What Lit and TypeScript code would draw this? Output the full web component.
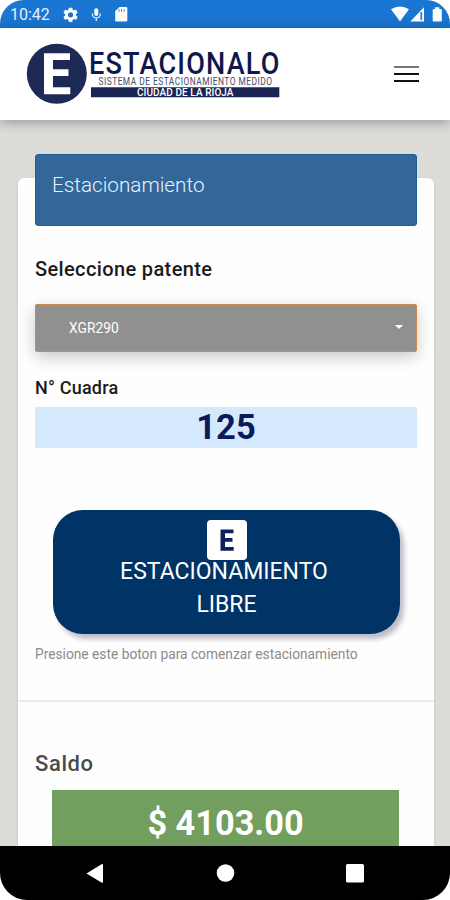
import { LitElement, html, css } from "lit";
import { customElement, property } from "lit/decorators.js";

@customElement("status-bar")
class StatusBar extends LitElement {
  static styles = css`
    :host { display: block; height: 28px; background: #1976d2; color: #fff; }
    .row { display: flex; align-items: center; height: 28px; }
    .time { width: 41px; margin-left: 10px; font-size: 16px; line-height: 28px; padding-top: 2px; box-sizing: border-box; white-space: nowrap; color: #e4effb; }
    .icons { display: block; width: 399px; height: 28px; }
  `;
  render() {
    return html`<div class="row">
      <div class="time">10:42</div>
      <svg class="icons" viewBox="51 0 399 28" fill="#fff">
        <g transform="translate(62 6.200) scale(.72)">
          <path d="M19.4 13a7.500 7.500 0 0 0 0-2l2.100-1.600c.2-.2.200-.4.100-.6l-2-3.500a.5.500 0 0 0-.6-.2l-2.500 1a7 7 0 0 0-1.700-1l-.4-2.600a.5.500 0 0 0-.5-.5h-4a.5.500 0 0 0-.5.500L9 5.100a7 7 0 0 0-1.700 1l-2.500-1a.5.500 0 0 0-.6.200l-2 3.500c-.1.200-.1.400.1.600L4.400 11a7.500 7.500 0 0 0 0 2l-2.100 1.600c-.2.200-.2.400-.1.600l2 3.500c.1.200.4.300.6.200l2.500-1a7 7 0 0 0 1.700 1l.4 2.600c0 .3.200.5.500.5h4c.3 0 .5-.2.500-.5l.4-2.600a7 7 0 0 0 1.700-1l2.500 1c.2.100.5 0 .6-.2l2-3.500c.1-.2.100-.4-.1-.6zM11.900 15.600a3.600 3.600 0 1 1 0-7.200 3.600 3.600 0 0 1 0 7.200z"/>
        </g>
        <rect x="94.300" y="8.300" width="4" height="7.800" rx="2"/>
        <path d="M92.300 13.500v.4a4 4 0 0 0 8 0v-.4M96.300 18v3" fill="none" stroke="#e4effb" stroke-width="1.300"/>
        <path d="M119.500 7h6.500q1.300 0 1.300 1.300v12q0 1.300-1.300 1.300h-9.500q-1.300 0-1.300-1.300v-9z"/>
        <path d="M119 9v3M121.500 9v3M124 9v3" stroke="#1976d2" stroke-width=".8"/>
        <path d="M391 9.300Q400 3.500 409 9.300L400 21.500z"/>
        <path d="M424 7.300V21.500H410.300z"/>
        <path d="M421.300 12v8" stroke="#1976d2" stroke-width="1.600"/>
        <path d="M435 7.300h4.300v1.700h1.200q1.300 0 1.300 1.200v10.200q0 1.200-1.300 1.200h-6.600q-1.200 0-1.200-1.200V10.200q0-1.200 1.200-1.200h1.100z"/>
      </svg>
    </div>`;
  }
}

@customElement("app-header")
class AppHeader extends LitElement {
  static styles = css`
    :host { display: block; position: relative; z-index: 1; height: 92px; background: #fff; box-shadow: 0 2px 12px rgba(0, 0, 0, .34); }
    .bar { display: flex; align-items: center; justify-content: space-between; height: 92px; padding: 0 31px 0 26px; }
    .logo { overflow: visible; }
    .menu { width: 25px; height: 18px; }
    text { font-family: Roboto, sans-serif; }
  `;
  render() {
    return html`<div class="bar">
      <svg class="logo" width="256" height="64" viewBox="26 42 256 64">
        <circle cx="56.800" cy="73.700" r="30" fill="#1d2a55"/>
        <path d="M44 53.300H70V60H53V69.300H68.500V76H53V87.200H70.300V94.200H44z" fill="#fff"/>
        <text transform="translate(89 74) scale(.86 1)" font-size="31.500" font-weight="500" textLength="221.500" lengthAdjust="spacing" fill="#10174a">ESTACIONALO</text>
        <text transform="translate(98.500 85) scale(.84 1)" font-size="10" textLength="206.500" lengthAdjust="spacing" fill="#444b70">SISTEMA DE ESTACIONAMIENTO MEDIDO</text>
        <path d="M91 87.200H279.300V97.300H91z" fill="#1a2555"/>
        <text x="137" y="96" font-size="10" font-weight="500" textLength="96.500" lengthAdjust="spacing" fill="#fff">CIUDAD DE LA RIOJA</text>
      </svg>
      <svg class="menu" viewBox="0 0 25 18">
        <path d="M0 2H25" stroke="#777" stroke-width="2"/>
        <path d="M0 9H25M0 16H25" stroke="#111" stroke-width="2"/>
      </svg>
    </div>`;
  }
}

@customElement("parking-card")
class ParkingCard extends LitElement {
  @property() plate = "XGR290";
  @property() block = "125";
  @property() balance = "4103.00";
  static styles = css`
    :host { display: block; margin: 58px 16px 0 18px; height: 668px; background: #fefefe; border-radius: 6px 6px 0 0; box-shadow: 0 1px 3px rgba(0, 0, 0, .12); }
    .body { display: flow-root; padding: 0 17px; }
    .title { height: 72px; margin-top: -24px; box-sizing: border-box; background: #336699; border-radius: 3px; border: 1px solid #1f5f98; color: #e8f1ff; font-size: 20.700px; font-weight: 300; line-height: 26px; padding: 17px 16px; }
    h2 { margin: 31px 0 0; font-size: 20px; line-height: 24px; font-weight: 500; color: #1b1b1b; letter-spacing: .37px; }
    .select { display: flex; align-items: center; justify-content: space-between; height: 48px; box-sizing: border-box; margin-top: 23px; padding: 0 13px 0 33px; background: #909090; border: 1px solid #cc8a44; border-radius: 2px; color: #fff; font-size: 13.800px; box-shadow: 0 5px 16px rgba(0, 0, 0, .22); }
    .caret { border: 4.500px solid transparent; border-top-color: #fff; border-bottom: 0; margin-top: -2px; }
    .label { margin-top: 25px; height: 22px; font-size: 18px; line-height: 22px; font-weight: 500; color: #1b1b1b; letter-spacing: .2px; }
    .number { margin-top: 8px; height: 41px; background: #d5e9fd; color: #0b1a5c; text-align: center; font-size: 34.500px; line-height: 41px; font-weight: 700; }
    .button { display: flex; flex-direction: column; align-items: center; box-sizing: border-box; width: 347px; height: 124px; margin: 62px 0 0 18px; padding-top: 10px; background: #003366; border-radius: 30px; box-shadow: 4px 5px 5px rgba(20, 20, 60, .28); color: #fff; font-size: 23px; line-height: 33px; }
    .badge { width: 40px; height: 40px; flex: none; }
    .caption { display: block; text-align: center; margin-top: -5px; }
    .first { display: block; margin-left: -5px; }
    .hint { margin-top: 10px; height: 20px; font-size: 13.750px; line-height: 20px; color: #8b8b8b; white-space: nowrap; }
    .divider { height: 2px; margin-top: 36px; background: #ebebe9; }
    .saldo { margin-top: 49px; height: 26px; font-size: 22px; line-height: 26px; font-weight: 500; color: #4b4b4b; letter-spacing: .6px; }
    .amount { margin: 13px 18px 0 17px; height: 56px; padding-top: 1px; background: #729e5e; color: #fff; font-size: 34.300px; line-height: 65px; font-weight: 700; text-align: center; overflow: hidden; }
  `;
  render() {
    return html`
      <div class="body">
        <div class="title">Estacionamiento</div>
        <h2>Seleccione patente</h2>
        <div class="select"><span>${this.plate}</span><i class="caret"></i></div>
        <div class="label">N° Cuadra</div>
        <div class="number">${this.block}</div>
        <div class="button">
          <svg class="badge" viewBox="0 0 40 40">
            <rect width="40" height="40" rx="4" fill="#fff"/>
            <path d="M13.500 9.500H26.500V13.300H18V18H25.500V21.800H18V27H26.700V30.800H13.500z" fill="#10205a"/>
          </svg>
          <span class="caption"><span class="first">ESTACIONAMIENTO</span>LIBRE</span>
        </div>
        <div class="hint">Presione este boton para comenzar estacionamiento</div>
      </div>
      <div class="divider"></div>
      <div class="body">
        <div class="saldo">Saldo</div>
        <div class="amount">$ ${this.balance}</div>
      </div>`;
  }
}

@customElement("nav-bar")
class NavBar extends LitElement {
  static styles = css`
    :host { display: block; height: 54px; background: #000; }
    svg { display: block; }
  `;
  render() {
    return html`<svg width="450" height="54" viewBox="0 0 450 54" fill="#fff">
      <path d="M86.500 27.500L101.500 18.200Q103 17.400 103 19V35.700Q103 37.200 101.500 36.500z"/>
      <circle cx="225.500" cy="27" r="8.800"/>
      <rect x="346" y="18" width="18" height="18.500" rx="1.500"/>
    </svg>`;
  }
}

@customElement("app-root")
class AppRoot extends LitElement {
  static styles = css`
    :host { display: block; width: 450px; height: 900px; background: #fff; font-family: Roboto, sans-serif; }
    .screen { display: flex; flex-direction: column; height: 900px; border-radius: 24px 24px 27px 27px; overflow: hidden; background: #dcddd8; }
    .content { flex: 1; min-height: 0; overflow: hidden; display: flow-root; }
  `;
  render() {
    return html`<div class="screen">
      <status-bar></status-bar>
      <app-header></app-header>
      <main class="content"><parking-card></parking-card></main>
      <nav-bar></nav-bar>
    </div>`;
  }
}
